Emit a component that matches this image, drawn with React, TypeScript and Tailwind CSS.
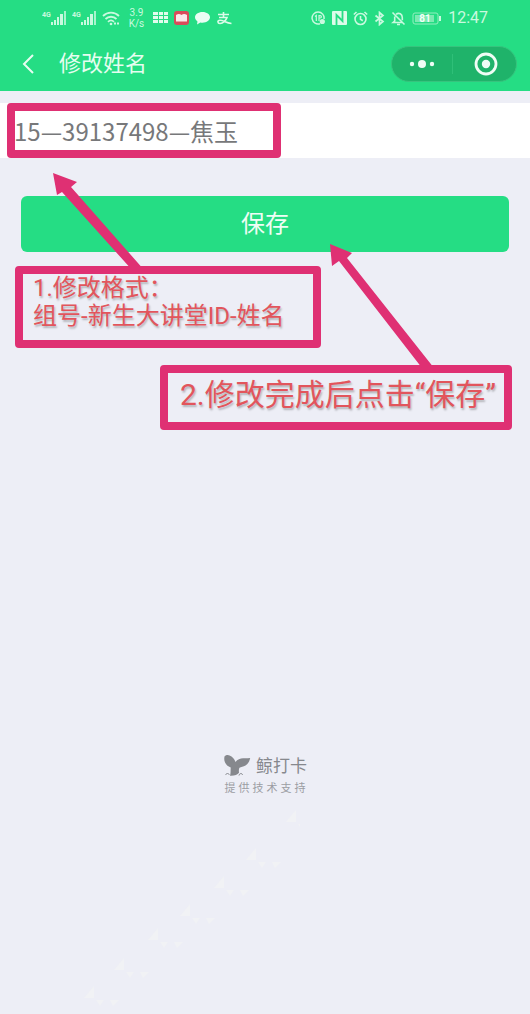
import React, { useState } from 'react';

const PINK = '#df3073';

const FLAKES = [
  [206, 24],
  [166, 62],
  [134, 90],
  [100, 118],
  [68, 142],
  [34, 172],
  [4, 200],
];

function Signal() {
  return (
    <svg width="25" height="16" viewBox="0 0 25 16" fill="#c9f9df" aria-hidden="true">
      <text x="0" y="7" fontSize="7" fontWeight="700" fontFamily="Roboto, sans-serif">4G</text>
      <rect x="9" y="12" width="2" height="3" />
      <rect x="12" y="10" width="2" height="5" />
      <rect x="15" y="7" width="2" height="8" />
      <rect x="18" y="4" width="3" height="11" />
      <rect x="22" y="1" width="2" height="14" opacity="0.8" />
    </svg>
  );
}

function Wifi() {
  return (
    <svg width="18" height="15" viewBox="0 0 18 15" fill="none" stroke="#c9f9df" strokeWidth="1.8" aria-hidden="true">
      <path d="M1 5C5.5 .5 12.5 .5 17 5" />
      <path d="M3.5 8c3-3 8-3 11 0" />
      <path d="M6 10.8c1.8-1.7 4.2-1.7 6 0" />
      <circle cx="9" cy="13" r="1.3" fill="#c9f9df" stroke="none" />
      <path d="M12 12.5h5" strokeWidth="2" strokeDasharray="2 1" />
    </svg>
  );
}

function StatusBar() {
  return (
    <div className="flex h-9 items-center justify-between px-[42px] text-[#c9f9df]">
      <div className="flex items-center gap-[5px]">
        <Signal />
        <Signal />
        <Wifi />
        <div className="mx-[3px] w-[17px] text-center text-[10px] leading-[11px]">
          <div>3.9</div>
          <div>K/s</div>
        </div>
        <svg width="16" height="14" viewBox="0 0 16 14" fill="#e0fcec" aria-hidden="true">
          {[1, 5, 9].map((y) =>
            [0, 6, 11].map((x) => <rect key={`${x}-${y}`} x={x} y={y} width={x === 0 ? 5 : 4} height="3" />)
          )}
        </svg>
        <svg width="15" height="14" viewBox="0 0 15 14" aria-hidden="true">
          <rect width="15" height="14" rx="3" fill="#d94c5a" />
          <path d="M2 4Q5 2 7.5 4Q10 2 13 4V10.5H2Z" fill="#fbe9ea" />
        </svg>
        <svg width="17" height="14" viewBox="0 0 17 14" fill="#eafdf3" aria-hidden="true">
          <path d="M8.5 1C12.8 1 16 3.3 16 6.3s-3.2 5.4-7.5 5.4c-.8 0-1.5-.1-2.2-.2L3 13.5l.5-3C2 9.5 1 8 1 6.3 1 3.3 4.2 1 8.5 1Z" />
        </svg>
        <svg width="16" height="14" viewBox="0 0 16 14" fill="none" stroke="#dcfbe9" strokeWidth="1.6" aria-hidden="true">
          <path d="M2 3.5h11M7.5 1v5.5M3 6.5h8c-1 3-4 6-7 6-2.5 0-3-3 0-3.3 3-.2 6 2.8 11.5 3.3" />
        </svg>
      </div>

      <div className="flex items-center gap-[6px]">
        <svg width="15" height="15" viewBox="0 0 15 15" fill="none" stroke="#c9f9df" strokeWidth="1.5" aria-hidden="true">
          <path d="M9 12.7A6 6 0 1 1 13 8" />
          <path d="M4 5.5 5.3 4.5v5.5M8 10V4.7h1.2c1.6 0 1.6 2.3 0 2.3H8" strokeWidth="1.2" />
          <circle cx="11.3" cy="10.5" r="2.6" fill="#c9f9df" stroke="none" />
        </svg>
        <svg width="15" height="14" viewBox="0 0 15 14" aria-hidden="true">
          <rect width="15" height="14" rx="1" fill="#dcfbe9" />
          <path d="M4.5 14V4L10.5 10V0" fill="none" stroke="#25dd84" strokeWidth="1.8" />
        </svg>
        <svg width="15" height="15" viewBox="0 0 15 15" fill="none" stroke="#c9f9df" strokeWidth="1.6" aria-hidden="true">
          <circle cx="7.5" cy="8" r="5.5" />
          <path d="M7.5 5v3.3l2.3 1.4M.8 3.5 3.5 1M14.2 3.5 11.5 1" />
        </svg>
        <svg width="11" height="15" viewBox="0 0 11 15" fill="none" stroke="#c9f9df" strokeWidth="1.7" aria-hidden="true">
          <path d="M1.5 4.5 9 10.5 5.5 13.5v-12L9 4.5 1.5 10.5" />
        </svg>
        <svg width="15" height="15" viewBox="0 0 15 15" fill="none" stroke="#c9f9df" strokeWidth="1.6" aria-hidden="true">
          <path d="M5 3.3C8 1 11.3 3.2 11.3 6.5v2.8M3.7 5.5V10L2 11.5h9M6 13.5h3M1.5 1.5l12 12" />
        </svg>
        <svg width="30" height="13" viewBox="0 0 30 13" aria-hidden="true">
          <rect x="1" y="1" width="25" height="11" rx="2" fill="none" stroke="#93efbf" />
          <rect x="3" y="3" width="19" height="7" fill="#7deab2" />
          <rect x="27" y="4" width="2" height="5" fill="#c9f9df" />
          <text x="13" y="10" textAnchor="middle" fontSize="10" fontWeight="700" fontFamily="Roboto, sans-serif" fill="#f4fff9">81</text>
        </svg>
        <span className="text-[16px] leading-5">12:47</span>
      </div>
    </div>
  );
}

function NavBar() {
  return (
    <div className="flex h-[55px] items-center pl-[20px] pr-[13px]">
      <button type="button" aria-label="返回" className="flex w-[39px] items-center">
        <svg width="16" height="22" viewBox="0 0 16 22" fill="none" stroke="#e6fdf0" strokeWidth="2">
          <path d="M13 2 4 11l9 9" />
        </svg>
      </button>
      <h1 className="text-[22px] leading-7 text-[#e6fdf0]">修改姓名</h1>
      <div className="ml-auto flex h-9 w-[126px] items-center rounded-full border border-[#36c47e] bg-[#1fb36a]">
        <button type="button" aria-label="更多" className="flex flex-1 justify-center">
          <svg width="28" height="10" viewBox="0 0 28 10" fill="#effdf5">
            <circle cx="4" cy="5" r="2.2" />
            <circle cx="14" cy="5" r="4" />
            <circle cx="24" cy="5" r="2.2" />
          </svg>
        </button>
        <div className="h-5 w-px bg-[#2fbf78]" />
        <button type="button" aria-label="关闭" className="flex flex-1 justify-center pl-1">
          <svg width="24" height="24" viewBox="0 0 24 24">
            <circle cx="12" cy="12" r="10" fill="none" stroke="#effdf5" strokeWidth="2.8" />
            <circle cx="12" cy="12" r="4.2" fill="#effdf5" />
          </svg>
        </button>
      </div>
    </div>
  );
}

function Footer() {
  return (
    <footer className="relative mt-[322px] flex flex-col items-center">
      <div className="flex items-center gap-[5px]">
        <svg width="28" height="26" viewBox="0 0 28 26" fill="#86888d" aria-hidden="true">
          <path d="M1.5 3.5C3 1.5 6 1.5 8.500 3.500 10.500 5 11.800 6.800 12.500 9 14.500 6.300 17.500 5.200 20.500 5.300c2.500.1 4.700-.1 6.700-.3-.8 3.500-2.200 6-4.700 7.500-2.200 1.300-4.500 1.500-6 2.300-.8 1.200-.7 3.200-.5 5-1.500 2-4.500 3.200-9 3 .8-2.500.5-4.500.7-8.300C3.500 13 .3 9 1.500 3.500Z" />
          <path d="M2.500 22c1-2 3-2 4 0M16 22.500c.3-2.500 3.500-2.500 3.500-.5" fill="none" stroke="#86888d" />
        </svg>
        <span className="text-[17px] leading-7 text-[#86888d]">鲸打卡</span>
      </div>
      <p className="pl-[3px] text-[11px] leading-[18px] tracking-[3px] text-[#9b9da3]">提供技术支持</p>
      <svg className="absolute left-20 top-full" width="220" height="210" viewBox="0 0 220 210" fill="#f1f2f5" aria-hidden="true">
        {FLAKES.map(([x, y]) => (
          <path key={x} d={`M${x} ${y}l10-12v12zM${x + 12} ${y + 2}h8l-4 6zM${x + 26} ${y + 2}h9l-6 6z`} />
        ))}
      </svg>
    </footer>
  );
}

export default function App() {
  const [name, setName] = useState('15—39137498—焦玉');

  return (
    <div className="min-h-screen bg-[#edeef6] font-[Roboto,'Noto_Sans_CJK_SC',sans-serif]">
      <header className="bg-[#25dd84]">
        <StatusBar />
        <NavBar />
      </header>

      <form onSubmit={(e) => e.preventDefault()}>
        <div className="relative mt-3">
          <input
            type="text"
            aria-label="姓名"
            value={name}
            onChange={(e) => setName(e.target.value)}
            className="block h-[55px] w-full bg-white px-[14px] font-['Noto_Sans_CJK_SC',sans-serif] text-[24px] text-[#77787a] outline-none"
          />
          <div className="pointer-events-none absolute inset-y-0 left-[7px] w-[274px] rounded border-8 border-[#df3073]" />
        </div>
        <div className="mt-[38px] px-[21px]">
          <button type="submit" className="h-14 w-full rounded-md bg-[#25dd84] text-[24px] text-[#effdf5]">
            保存
          </button>
        </div>
      </form>

      <div className="mt-[14px] flex flex-col gap-[17px] pl-[15px] pr-[18px] text-[#e2555c] text-shadow-[1px_2px_2px_rgb(0_0_0/0.25)]">
        <div className="relative self-start rounded border-8 border-[#df3073] pb-[10px] pl-[10px] pr-7 text-[24px] leading-7">
          <p>1.修改格式：</p>
          <p>组号-新生大讲堂ID-姓名</p>
          <svg className="absolute bottom-full left-[30px]" width="92" height="101" viewBox="0 0 92 101" fill={PINK} aria-hidden="true">
            <path d="M0 0 24 9 18 14 92 98H80L9 19 4 22Z" />
          </svg>
        </div>
        <div className="relative self-end rounded border-8 border-[#df3073] pb-[5px] pl-[12px] pr-[8px] text-[30px] leading-[44px]">
          <p className="whitespace-nowrap">2.修改完成后点击“保存”</p>
          <svg className="absolute bottom-full left-[162px]" width="104" height="129" viewBox="0 0 104 129" fill={PINK} aria-hidden="true">
            <path d="M0 0 22 9 17 14 104 124H92L9 17 2 22Z" />
          </svg>
        </div>
      </div>

      <Footer />
    </div>
  );
}
